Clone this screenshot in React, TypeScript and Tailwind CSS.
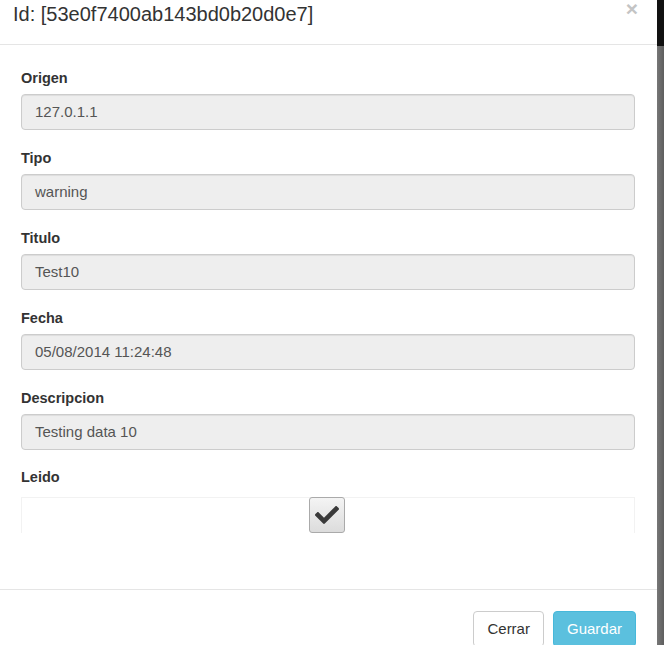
import React from "react";
import { FaCheck } from "react-icons/fa";

const fields = [
  { label: "Origen", value: "127.0.1.1" },
  { label: "Tipo", value: "warning" },
  { label: "Titulo", value: "Test10" },
  { label: "Fecha", value: "05/08/2014 11:24:48" },
  { label: "Descripcion", value: "Testing data 10" },
];

const App = () => {
  return (
    <div
      className="flex w-[664px] h-[645px] overflow-hidden bg-white text-[#333]"
      style={{ fontFamily: '"Liberation Sans", Arial, sans-serif' }}
    >
      <div className="relative w-[657px] flex flex-col">
        {/* Header */}
        <div className="h-[45px] shrink-0 border-b border-[#e5e5e5] pl-[13px] relative">
          <h4 className="text-[20px] leading-[28px] text-[#333]">
            Id: [53e0f7400ab143bd0b20d0e7]
          </h4>
          <button className="absolute right-[19px] top-0 text-[21px] font-bold leading-[17px] text-[#c4c4c4]">
            ×
          </button>
        </div>

        {/* Body */}
        <div className="px-[21px] pt-[23px] h-[545px] shrink-0 border-b border-[#e5e5e5]">
          {fields.map((f) => (
            <div key={f.label} className="mb-[18px]">
              <label className="block text-[14.5px] font-bold leading-[20px] mb-[6px]">
                {f.label}
              </label>
              <div className="h-[36px] w-[614px] rounded-[4px] border border-[#ccc] bg-[#eee] px-[13px] flex items-center text-[15px] text-[#555] shadow-[inset_0_1px_1px_rgba(0,0,0,0.075)]">
                {f.value}
              </div>
            </div>
          ))}
          <label className="block text-[14.5px] font-bold leading-[20px] -mt-[1px] mb-[10px]">
            Leido
          </label>
          <div className="h-[36px] w-[614px] border-t border-x border-[#f2f2f2] flex justify-center">
            <div className="w-[36px] h-[36px] -mt-[1px] -ml-[2px] rounded-[3px] border border-[#aaa] bg-gradient-to-b from-[#f4f4f4] to-[#dcdcdc] flex items-center justify-center">
              <FaCheck className="text-[#3a3a3a]" size={24} />
            </div>
          </div>
        </div>

        {/* Footer */}
        <div className="flex justify-end gap-[9px] pr-[21px] pt-[21px]">
          <button className="h-[36px] px-[13px] rounded-[4px] border border-[#ccc] bg-white text-[15px] text-[#333]">
            Cerrar
          </button>
          <button className="h-[36px] px-[13px] rounded-[4px] border border-[#46b8da] bg-[#5bc0de] text-[15px] text-white">
            Guardar
          </button>
        </div>
      </div>
      <div className="w-[7px] flex flex-col">
        <div className="h-[46px] bg-[#111]" />
        <div className="flex-1 bg-gradient-to-r from-[#777] to-[#5e5e5e]" />
      </div>
    </div>
  );
};

export default App;
